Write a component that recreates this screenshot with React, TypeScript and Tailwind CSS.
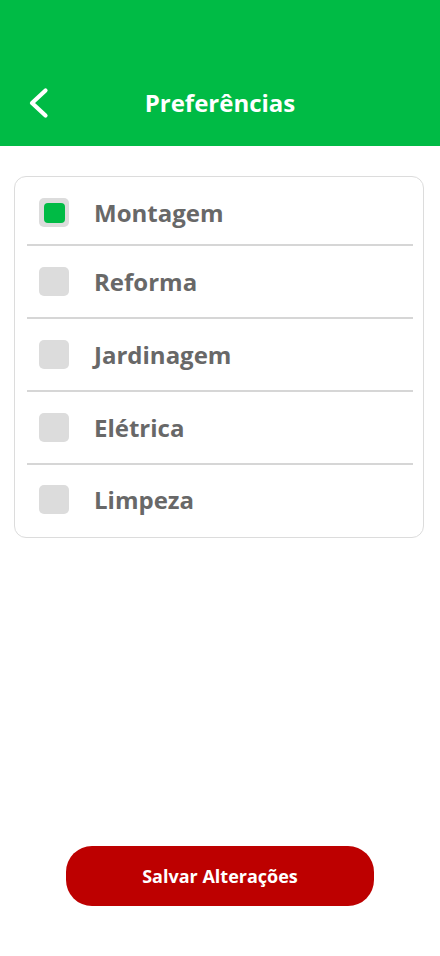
import { useState } from 'react'

const options = ['Montagem', 'Reforma', 'Jardinagem', 'Elétrica', 'Limpeza']

function App() {
  const [selected, setSelected] = useState<string[]>(['Montagem'])

  const toggle = (name: string) => {
    setSelected((prev) => (prev.includes(name) ? prev.filter((n) => n !== name) : [...prev, name]))
  }

  return (
    <main
      className="flex min-h-[956px] w-full flex-col bg-white"
      style={{ fontFamily: '"Open Sans", "Noto Sans", sans-serif' }}
    >
      <header className="flex h-[146px] items-end bg-[#00bb45] pb-[28px]">
        <div className="relative flex h-[30px] w-full items-center justify-center">
          <button type="button" className="absolute left-[27px] top-0 flex h-[30px] w-[24px] items-center justify-center">
            <svg width="24" height="34" viewBox="0 0 24 34" fill="none">
              <path d="M18.5 4.5 L5 17 L18.5 29.5" stroke="white" strokeWidth="4.2" strokeLinecap="round" strokeLinejoin="round" />
            </svg>
          </button>
          <h1 className="text-[24px] font-bold leading-[30px] text-white">Preferências</h1>
        </div>
      </header>

      <section className="ml-[14px] mr-[16px] mt-[30px] rounded-[12px] border border-[#dcdcdc] bg-white">
        {options.map((name, idx) => {
          const checked = selected.includes(name)
          const first = idx === 0
          const last = idx === options.length - 1
          return (
            <div key={name}>
              {!first && <div className="ml-[12px] mr-[10px] h-[2px] bg-[#d6d6d6]" />}
              <button
                type="button"
                onClick={() => toggle(name)}
                className={`flex w-full items-center pl-[24px] text-left ${
                  first ? 'pt-[21px] pb-[17px]' : last ? 'pt-[20px] pb-[23px]' : 'py-[21px]'
                }`}
              >
                <span className="flex h-[29px] w-[30px] items-center justify-center rounded-[5px] bg-[#dcdcdc]">
                  {checked && <span className="h-[20px] w-[21px] rounded-[4px] bg-[#00bb45]" />}
                </span>
                <span className="ml-[25px] text-[24px] font-bold leading-[29px] text-[#686868]">{name}</span>
              </button>
            </div>
          )
        })}
      </section>

      <div className="mt-auto flex justify-center pb-[50px]">
        <button
          type="button"
          className="h-[60px] w-[308px] rounded-[26px] bg-[#bd0000] text-[18px] font-bold text-white"
        >
          Salvar Alterações
        </button>
      </div>
    </main>
  )
}

export default App
